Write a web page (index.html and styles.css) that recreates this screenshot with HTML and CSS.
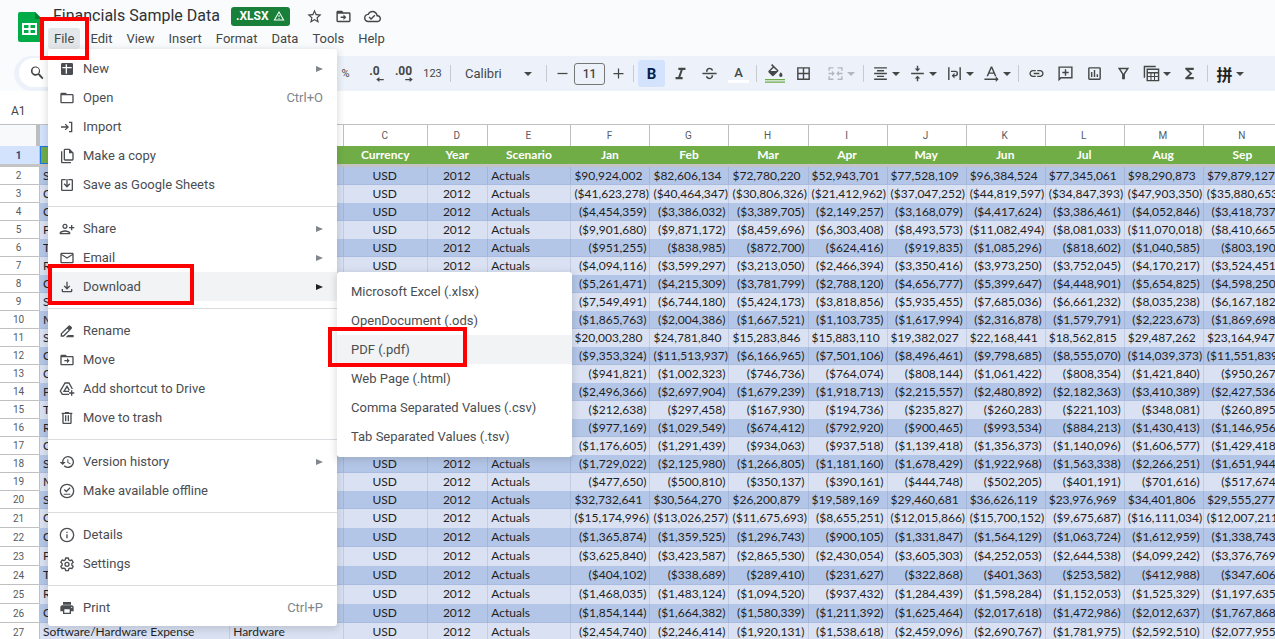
FILE: index.html
```html
<!DOCTYPE html>
<html lang="en">
<head>
<meta charset="utf-8">
<title>Financials Sample Data</title>
<link rel="stylesheet" href="styles.css">
</head>
<body>
<header class="top">
  <svg class="logo" viewBox="0 0 24 30" aria-hidden="true"><path fill="#00ac47" d="M2 0h15l7 7v21a2 2 0 0 1-2 2H2a2 2 0 0 1-2-2V2a2 2 0 0 1 2-2z"/><path fill="#00832d" d="M17 0l7 7h-7z"/><path fill="#fff" fill-rule="evenodd" d="M4 11h15v12H4zM6 13v3h4.500v-3zM12.500 13v3H17v-3zM6 18v3h4.500v-3zM12.500 18v3H17v-3z"/></svg>
  <div class="heading">
    <div class="title-row">
      <h1 class="title">Financials Sample Data</h1>
      <span class="badge">.XLSX <svg class="badge-icon" viewBox="0 0 24 24" aria-hidden="true"><path d="M12 5.990 19.530 19H4.470L12 5.990M12 2 1 21h22L12 2zm1 14h-2v2h2v-2zm0-6h-2v4h2v-4z"/></svg></span>
      <button class="title-btn" aria-label="Star"><svg viewBox="0 0 24 24"><path d="M22 9.240l-7.190-.62L12 2 9.190 8.630 2 9.240l5.460 4.730L5.820 21 12 17.270 18.180 21l-1.630-7.030L22 9.240zM12 15.400l-3.760 2.270 1-4.280-3.320-2.880 4.380-.38L12 6.100l1.710 4.040 4.380.38-3.320 2.880 1 4.280L12 15.400z"/></svg></button>
      <button class="title-btn" aria-label="Move"><svg viewBox="0 0 24 24"><path d="M20 6h-8l-2-2H4c-1.100 0-2 .9-2 2v12c0 1.100.9 2 2 2h16c1.100 0 2-.9 2-2V8c0-1.100-.9-2-2-2zm0 12H4V8h16v10zM12 17l4-4-4-4v3H8v2h4z"/></svg></button>
      <button class="title-btn" aria-label="Document status"><svg viewBox="0 0 24 24"><path d="M19.350 10.040C18.670 6.590 15.640 4 12 4 9.110 4 6.610 5.640 5.360 8.040 2.350 8.360 0 10.900 0 14c0 3.310 2.690 6 6 6h13c2.760 0 5-2.240 5-5 0-2.640-2.050-4.780-4.650-4.960zM19 18H6c-2.210 0-4-1.790-4-4 0-2.050 1.530-3.760 3.560-3.970l1.070-.11.5-.95C8.080 7.140 9.940 6 12 6c2.620 0 4.880 1.860 5.390 4.430l.3 1.500 1.530.11c1.560.1 2.780 1.410 2.780 2.960 0 1.650-1.350 3-3 3zm-9-3.820-2.090-2.090L6.500 13.500 10 17l6.010-6.010-1.410-1.410z"/></svg></button>
    </div>
    <nav class="menubar">
      <div class="menu-slot">
        <button class="menu-btn open">File</button>
        <div class="menu">
          <button class="item"><svg class="ic" viewBox="0 0 24 24"><path fill-rule="evenodd" d="M5 3h14a2 2 0 0 1 2 2v14a2 2 0 0 1-2 2H5a2 2 0 0 1-2-2V5a2 2 0 0 1 2-2zM5 9v2h5v8h2v-8h7V9h-7V5h-2v4z"/></svg><span class="label">New</span><span class="arrow"></span></button>
          <button class="item"><svg class="ic" viewBox="0 0 24 24"><path d="M20 6h-8l-2-2H4c-1.100 0-2 .9-2 2v12c0 1.100.9 2 2 2h16c1.100 0 2-.9 2-2V8c0-1.100-.9-2-2-2zm0 12H4V8h16v10z"/></svg><span class="label">Open</span><span class="keys">Ctrl+O</span></button>
          <button class="item"><svg class="ic" viewBox="0 0 24 24"><path d="M10 7l-1.400 1.400 2.600 2.600H3v2h8.200l-2.600 2.600L10 17l5-5-5-5zM15 4h5v16h-5v-2h3V6h-3z"/></svg><span class="label">Import</span></button>
          <button class="item"><svg class="ic" viewBox="0 0 24 24"><path d="M16 1H9C7.900 1 7 1.900 7 3v14c0 1.100.9 2 2 2h11c1.100 0 2-.9 2-2V7l-6-6zm4 16H9V3h6v5h5v9zM5 5H3v16c0 1.100.9 2 2 2h13v-2H5V5z"/></svg><span class="label">Make a copy</span></button>
          <button class="item"><svg class="ic" viewBox="0 0 24 24"><path d="M19 3h-5v2h5v14H5V5h5V3H5a2 2 0 0 0-2 2v14a2 2 0 0 0 2 2h14a2 2 0 0 0 2-2V5a2 2 0 0 0-2-2zM11 3v9L8.500 9.500 7 11l5 5 5-5-1.500-1.500L13 12V3z"/></svg><span class="label">Save as Google Sheets</span></button>
          <hr class="line">
          <button class="item"><svg class="ic" viewBox="0 0 24 24"><path d="M9 12c2.210 0 4-1.790 4-4s-1.790-4-4-4-4 1.790-4 4 1.790 4 4 4zm0-6c1.100 0 2 .9 2 2s-.9 2-2 2-2-.9-2-2 .9-2 2-2zm0 8c-2.670 0-8 1.340-8 4v2h16v-2c0-2.660-5.330-4-8-4zm-6 4c.22-.72 3.310-2 6-2 2.700 0 5.800 1.290 6 2H3zM20 9V6h-2v3h-3v2h3v3h2v-3h3V9z"/></svg><span class="label">Share</span><span class="arrow"></span></button>
          <button class="item"><svg class="ic" viewBox="0 0 24 24"><path d="M22 6c0-1.100-.9-2-2-2H4c-1.100 0-2 .9-2 2v12c0 1.100.9 2 2 2h16c1.100 0 2-.9 2-2V6zm-2 0-8 5-8-5h16zm0 12H4V8l8 5 8-5v10z"/></svg><span class="label">Email</span><span class="arrow"></span></button>
          <div class="sub-slot">
            <button class="item active"><svg class="ic" viewBox="0 0 24 24"><path d="M18 15v3H6v-3H4v3c0 1.100.9 2 2 2h12c1.100 0 2-.9 2-2v-3h-2zm-1-4-1.410-1.410L13 12.170V4h-2v8.170L8.410 9.590 7 11l5 5 5-5z"/></svg><span class="label">Download</span><span class="arrow"></span></button>
            <span class="mark mark-download"></span>
            <div class="menu submenu">
              <button class="item">Microsoft Excel (.xlsx)</button>
              <button class="item">OpenDocument (.ods)</button>
              <div class="sub-slot">
                <button class="item active">PDF (.pdf)</button>
                <span class="mark mark-pdf"></span>
              </div>
              <button class="item">Web Page (.html)</button>
              <button class="item">Comma Separated Values (.csv)</button>
              <button class="item">Tab Separated Values (.tsv)</button>
            </div>
          </div>
          <hr class="line">
          <button class="item"><svg class="ic" viewBox="0 0 24 24"><path fill-rule="evenodd" d="M17 4a2 2 0 0 0-2.800 0L2.500 15.700V20.500h4.800L19 8.800a2 2 0 0 0 0-2.800zM6.500 18.500h-2v-2l8-8 2 2zM22 18v3.500H10l3.500-3.500z"/></svg><span class="label">Rename</span></button>
          <button class="item"><svg class="ic" viewBox="0 0 24 24"><path d="M20 6h-8l-2-2H4c-1.100 0-2 .9-2 2v12c0 1.100.9 2 2 2h16c1.100 0 2-.9 2-2V8c0-1.100-.9-2-2-2zm0 12H4V8h16v10zM12 17l4-4-4-4v3H8v2h4z"/></svg><span class="label">Move</span></button>
          <button class="item"><svg class="ic" viewBox="0 0 24 24"><g fill="none" stroke="currentColor" stroke-width="2"><path d="M15 20H5l-3-5L9 3h6l5 9"/><path d="M15 15.500H7.500L12 8l3.500 6M19 14v8M15 18h8"/></g></svg><span class="label">Add shortcut to Drive</span></button>
          <button class="item"><svg class="ic" viewBox="0 0 24 24"><path d="M15 4V3H9v1H4v2h1v13c0 1.100.9 2 2 2h10c1.100 0 2-.9 2-2V6h1V4h-5zm2 15H7V6h10v13zM9 8h2v9H9zm4 0h2v9h-2z"/></svg><span class="label">Move to trash</span></button>
          <hr class="line">
          <button class="item"><svg class="ic" viewBox="0 0 24 24"><path d="M13.500 3a9 9 0 0 0-9 9H1l4.500 4.500L10 12H6.500a7 7 0 1 1 2.060 4.940l-1.420 1.420A9 9 0 1 0 13.500 3zM12.500 8v5l4.300 2.500.7-1.200-3.500-2.100V8z"/></svg><span class="label">Version history</span><span class="arrow"></span></button>
          <button class="item"><svg class="ic" viewBox="0 0 24 24"><path d="M12 1a11 11 0 1 0 0 22 11 11 0 0 0 0-22zm0 20a9 9 0 1 1 0-18 9 9 0 0 1 0 18zM7 16h10v1.800H7zM15.900 6.500 11 11.400 8.600 9 7.200 10.400l3.800 3.800 6.300-6.300z"/></svg><span class="label">Make available offline</span></button>
          <hr class="line">
          <button class="item"><svg class="ic" viewBox="0 0 24 24"><path d="M11 7h2v2h-2zm0 4h2v6h-2zm1-10a11 11 0 1 0 0 22 11 11 0 0 0 0-22zm0 20a9 9 0 1 1 0-18 9 9 0 0 1 0 18z"/></svg><span class="label">Details</span></button>
          <button class="item"><svg class="ic" viewBox="0 0 24 24"><g fill="none" stroke="currentColor" stroke-width="2" stroke-linejoin="round"><path d="M10 3h4l.6 2.700 2 1.200 2.700-.9 2 3.500-2 1.800v2.400l2 1.800-2 3.500-2.700-.9-2 1.200L14 22h-4l-.6-2.700-2-1.200-2.700.9-2-3.500 2-1.800v-2.400l-2-1.800 2-3.500 2.700.9 2-1.200z"/><circle cx="12" cy="12.500" r="3"/></g></svg><span class="label">Settings</span></button>
          <hr class="line">
          <button class="item"><svg class="ic" viewBox="0 0 24 24"><path d="M19 8H5c-1.660 0-3 1.340-3 3v6h4v4h12v-4h4v-6c0-1.660-1.340-3-3-3zm-3 11H8v-5h8v5zm3-7c-.55 0-1-.45-1-1s.45-1 1-1 1 .45 1 1-.45 1-1 1zm-1-9H6v4h12V3z"/></svg><span class="label">Print</span><span class="keys">Ctrl+P</span></button>
        </div>
        <span class="mark mark-file"></span>
      </div>
      <button class="menu-btn">Edit</button>
      <button class="menu-btn">View</button>
      <button class="menu-btn">Insert</button>
      <button class="menu-btn">Format</button>
      <button class="menu-btn">Data</button>
      <button class="menu-btn">Tools</button>
      <button class="menu-btn">Help</button>
    </nav>
  </div>
</header>

<div class="toolbar" role="toolbar" aria-label="Main">
  <div class="tb-start"><button class="search" aria-label="Search the menus"><svg viewBox="0 0 24 24"><path d="M15.500 14h-.79l-.28-.27A6.500 6.500 0 1 0 13 15.200l.73.59v.79L18.700 21.500l1.700-1.700zm-6 0a4.500 4.500 0 1 1 0-9 4.500 4.500 0 0 1 0 9z"/></svg></button></div>
  <button class="tb dim">%</button>
  <button class="tb dec" aria-label="Decrease decimal places">.0<svg class="dec-arrow" viewBox="0 0 12 8"><path d="M12 3H5V0L0 4l5 4V5h7z"/></svg></button>
  <button class="tb dec" aria-label="Increase decimal places">.00<svg class="dec-arrow" viewBox="0 0 12 8"><path d="M0 3h7V0l5 4-5 4V5H0z"/></svg></button>
  <button class="tb dim">123</button>
  <span class="sep"></span>
  <button class="font-btn">Calibri<span class="caret"></span></button>
  <span class="sep"></span>
  <button class="tb step" aria-label="Decrease font size"><svg viewBox="0 0 24 24"><path d="M4 11h16v2H4z"/></svg></button>
  <input class="size" value="11" aria-label="Font size">
  <button class="tb step" aria-label="Increase font size"><svg viewBox="0 0 24 24"><path d="M20 13h-7v7h-2v-7H4v-2h7V4h2v7h7z"/></svg></button>
  <span class="sep"></span>
  <button class="tb on" aria-label="Bold"><b>B</b></button>
  <button class="tb" aria-label="Italic"><svg viewBox="0 0 24 24"><path d="M9 4v3h3.200L8.800 17H5v3h10v-3h-3.200l3.400-10H19V4z"/></svg></button>
  <button class="tb" aria-label="Strikethrough"><svg viewBox="0 0 24 24"><path d="M2 11h20v2H2zM7 9.500C7 6 9 4 12.200 4c2.700 0 4.500 1.400 5 3.700h-2.400c-.4-1-1.200-1.600-2.600-1.600-1.700 0-2.800.9-2.800 2.400 0 .4.100.7.200 1zM14.800 14.500h2.400c0 3.400-1.800 5.500-5.200 5.500-2.900 0-4.900-1.500-5.200-4h2.400c.3 1.200 1.300 1.900 2.800 1.900 1.800 0 2.800-1 2.800-2.500z"/></svg></button>
  <button class="tb ink" aria-label="Text color">A</button>
  <span class="sep"></span>
  <button class="tb" aria-label="Fill color"><svg class="fill" viewBox="0 0 24 24"><path d="M16 7.500 8.600 0 7.200 1.400l2 2L4.400 8a1.500 1.500 0 0 0 0 2.100l4 4c.6.600 1.500.6 2.100 0l5.500-5.500a.8.8 0 0 0 0-1.100zM6.500 8.500l4-4 4 4zM19 10s-2 2.200-2 3.500a2 2 0 0 0 4 0c0-1.300-2-3.500-2-3.500z"/><path fill="#6cab46" d="M0 18h24v1.500H0zM0 21h24v1.500H0z"/></svg></button>
  <button class="tb" aria-label="Borders"><svg viewBox="0 0 24 24"><path fill-rule="evenodd" d="M3 3h18v18H3zm2 2v6h6V5zm8 0v6h6V5zm-8 8v6h6v-6zm8 0v6h6v-6z"/></svg></button>
  <button class="combo off merge" aria-label="Merge cells"><svg viewBox="0 0 24 24"><path d="M2 3h7v2H4v3H2zM15 3h7v5h-2V5h-5zM2 16h2v3h5v2H2zM20 16h2v5h-7v-2h5zM2 11h5V8l4 4-4 4v-3H2zM22 11h-5V8l-4 4 4 4v-3h5z"/></svg><span class="caret"></span></button>
  <span class="sep"></span>
  <button class="combo" aria-label="Horizontal align"><svg viewBox="0 0 24 24"><path d="M3 3h18v2H3zM7 7h10v2H7zM3 11h18v2H3zM7 15h10v2H7zM3 19h18v2H3z"/></svg><span class="caret"></span></button>
  <button class="combo" aria-label="Vertical align"><svg viewBox="0 0 24 24"><path d="M3 11h18v2H3zM11 1h2v4h3l-4 4-4-4h3zM11 23h2v-4h3l-4-4-4 4h3z"/></svg><span class="caret"></span></button>
  <button class="combo" aria-label="Text wrapping"><svg viewBox="0 0 24 24"><path d="M3 3h2v18H3zM19 3h2v18h-2zM7 8h6a4 4 0 0 1 0 8h-1v3l-4-4 4-4v3h1a2 2 0 0 0 0-4H7z"/></svg><span class="caret"></span></button>
  <button class="combo" aria-label="Text rotation"><svg viewBox="0 0 24 24"><path fill-rule="evenodd" d="M11 2h2l6 14h-2.200l-1.500-3.500H8.700L7.200 16H5zm1 2.800L9.500 10.500h5zM2 19h16v-3l4 4-4 4v-3H2z"/></svg><span class="caret"></span></button>
  <span class="sep"></span>
  <button class="tb" aria-label="Insert link"><svg viewBox="0 0 24 24"><path d="M3.900 12c0-1.710 1.390-3.100 3.100-3.100h4V7H7c-2.760 0-5 2.240-5 5s2.240 5 5 5h4v-1.900H7c-1.710 0-3.100-1.390-3.100-3.100zM8 13h8v-2H8v2zm9-6h-4v1.900h4c1.710 0 3.100 1.390 3.100 3.100s-1.390 3.100-3.100 3.100h-4V17h4c2.760 0 5-2.240 5-5s-2.240-5-5-5z"/></svg></button>
  <button class="tb" aria-label="Insert comment"><svg viewBox="0 0 24 24"><path fill-rule="evenodd" d="M2 2h20v17H6l-4 4zm2 2v14l1.200-1H20V4zM11 6h2v3.500h3.500v2H13V15h-2v-3.500H7.500v-2H11z"/></svg></button>
  <button class="tb" aria-label="Insert chart"><svg viewBox="0 0 24 24"><path fill-rule="evenodd" d="M5 3h14a2 2 0 0 1 2 2v14a2 2 0 0 1-2 2H5a2 2 0 0 1-2-2V5a2 2 0 0 1 2-2zm0 2v14h14V5zM7 10h2v7H7zM11 7h2v10h-2zM15 13h2v4h-2z"/></svg></button>
  <button class="tb" aria-label="Create a filter"><svg viewBox="0 0 24 24"><path fill-rule="evenodd" d="M4 4h16l-6 9v7h-4v-7zm3.800 2L12 12.300 16.200 6z"/></svg></button>
  <button class="combo" aria-label="Filter views"><svg viewBox="0 0 24 24"><path fill-rule="evenodd" d="M1 1h17v2H3v15H1zM5 5h18v18H5zm2 2v3h14V7zm0 5v3.500h3.500V12zm5 0v3.500h3.500V12zm5 0v3.500h4V12zM7 17v4h3.500v-4zm5 0v4h3.500v-4zm5 0v4h4v-4z"/></svg><span class="caret"></span></button>
  <button class="tb" aria-label="Functions"><svg viewBox="0 0 24 24"><path d="M18 4H6v2l6.500 6L6 18v2h12v-3h-7l5-5-5-5h7z"/></svg></button>
  <span class="sep"></span>
  <button class="combo"><span class="glyph">拼</span><span class="caret"></span></button>
</div>

<div class="namebox">A1</div>

<main class="sheet">
  <table class="grid">
    <colgroup><col class="c-num"><col class="c-a"><col class="c-b"><col class="c-c"><col class="c-d"><col class="c-e"><col class="c-m" span="9"></colgroup>
    <thead id="head"></thead>
    <tbody id="rows"></tbody>
  </table>
</main>
<script src="grid.js"></script>
</body>
</html>
```

FILE: styles.css
```css
* { box-sizing: border-box; }
body {
  margin: 0;
  height: 100vh;
  display: flex;
  flex-direction: column;
  overflow: hidden;
  background: #f9fbfd;
  color: #444746;
  font-family: Roboto, "Liberation Sans", sans-serif;
  font-size: 13px;
}
button {
  font: inherit;
  color: inherit;
  background: none;
  border: 0;
  padding: 0;
  margin: 0;
}
svg { fill: currentColor; display: block; }

.top {
  position: relative;
  z-index: 2;
  display: flex;
  padding-left: 18px;
  height: 56px;
  flex: none;
}
.logo { width: 24px; height: 30px; margin-top: 12px; }
.heading { margin-left: 6px; padding-top: 4px; }
.title-row { display: flex; align-items: center; height: 24px; padding-left: 5px; }
.title { margin: 0; font-size: 16px; line-height: 24px; font-weight: 400; color: #303134; }
.badge {
  display: flex;
  align-items: center;
  gap: 4px;
  height: 19px;
  margin: 0 10px 0 11px;
  padding: 0 5px;
  border-radius: 3px;
  background: #188038;
  color: #fff;
  font-size: 12px;
  font-weight: 700;
}
.badge-icon { width: 12px; height: 12px; }
.title-btn { width: 29px; height: 20px; padding: 0 6px; }
.title-btn svg { width: 17px; height: 17px; }

.menubar { display: flex; gap: 2px; }
.menu-slot { position: relative; margin-right: 2px; }
.menu-btn { height: 21px; padding: 0 6px; border-radius: 3px; color: #444746; }
.menu-btn.open { background: #e4e7ea; }

.menu {
  position: absolute;
  top: 21px;
  left: 0;
  width: 289px;
  padding: 5px 0 4px;
  border-radius: 3px;
  background: #fff;
  box-shadow: 0 2px 6px 2px rgba(60, 64, 67, 0.15);
  color: #4a4d51;
}
.item {
  display: flex;
  align-items: center;
  width: 100%;
  height: 29px;
  padding: 0 14px 0 11px;
  text-align: left;
}
.item.active { background: #f1f3f4; }
.ic { width: 16px; height: 16px; margin-right: 8px; }
.label { flex: 1; }
.keys { color: #80868b; }
.arrow {
  border-left: 7px solid #80868b;
  border-top: 3px solid transparent;
  border-bottom: 3px solid transparent;
}
.active .arrow { border-left-color: #202124; }
.line { height: 1px; margin: 7px 0; border: 0; background: #dadce0; }
.sub-slot { position: relative; }
.submenu { top: 0; left: 289px; width: 235px; padding: 5px 0 6px; z-index: 3; }
.submenu .item { padding-left: 14px; }

/* Tutorial highlight frames */
.mark { position: absolute; border: 4px solid #f00; pointer-events: none; z-index: 4; }
.mark-file { left: -8px; top: -11px; width: 49px; height: 43px; }
.mark-download { left: 0; top: -8px; width: 146px; height: 41px; z-index: 2; }
.mark-pdf { left: -9px; top: -8px; width: 139px; height: 40px; }

.toolbar {
  display: flex;
  align-items: center;
  flex: none;
  height: 35px;
  margin-left: 14px;
  border-radius: 18px 0 0 18px;
  background: #edf2fa;
}
.tb-start { flex: 0 0 317px; padding-left: 5px; }
.search { width: 90px; height: 29px; border-radius: 15px; background: #fff; padding-left: 10px; }
.search svg { width: 17px; height: 17px; }
.tb {
  flex: none;
  display: flex;
  align-items: center;
  justify-content: center;
  width: 27px;
  height: 27px;
  margin: 0 1px;
  border-radius: 3px;
}
.tb svg, .combo svg { width: 17px; height: 17px; }
.dim { font-size: 11px; }
.dec { position: relative; font-size: 12px; font-weight: 700; align-items: flex-start; padding-top: 4px; }
.tb .dec-arrow { position: absolute; right: 4px; bottom: 5px; width: 8px; height: 5px; }
.sep { flex: none; width: 1px; height: 17px; margin: 0 3px; background: #c7cacf; }
.font-btn {
  flex: none;
  display: flex;
  align-items: center;
  justify-content: space-between;
  width: 89px;
  height: 27px;
  padding: 0 11px;
}
.caret {
  flex: none;
  border-top: 4px solid currentColor;
  border-left: 4px solid transparent;
  border-right: 4px solid transparent;
}
.step { width: 24px; margin: 0; }
.tb.step svg { width: 15px; height: 15px; }
.size {
  flex: none;
  width: 31px;
  height: 22px;
  margin: 0 1px 0 0;
  padding: 0;
  border: 1px solid #747775;
  border-radius: 3px;
  background: transparent;
  color: #444746;
  font: 500 12px Roboto, sans-serif;
  text-align: center;
}
.on { background: #d3e3fd; color: #041e49; font-size: 15px; }
.ink { height: 18px; width: 21px; margin: 0 4px; border-radius: 0; border-bottom: 3px solid #fff; font-weight: 500; }
.tb .fill { width: 20px; height: 20px; }
.combo {
  flex: none;
  display: flex;
  align-items: center;
  width: 37px;
  height: 27px;
  padding-left: 5px;
  gap: 3px;
}
.merge { width: 42px; padding-left: 9px; }
.off { color: #b4b8bd; }
.glyph { width: 17px; font: 700 16px "Noto Sans CJK SC", sans-serif; color: #1f1f1f; }

.namebox { flex: none; height: 33px; padding: 6px 11px 0; line-height: 28px; font-size: 12px; background: #fff; color: #444746; }

.sheet { flex: 1; min-height: 0; overflow: hidden; background: #fff; }
.grid {
  width: 1283px;
  table-layout: fixed;
  border-collapse: separate;
  border-spacing: 0;
  font-family: Lato, Carlito, sans-serif;
  font-size: 12px;
  color: #1f1f1f;
}
.c-num { width: 40px; }
.c-a { width: 190px; }
.c-b { width: 114px; }
.c-c { width: 84px; }
.c-d { width: 60px; }
.c-e { width: 83px; }
.c-m { width: 79px; }
.grid th, .grid td { padding: 0 2px 0 3px; line-height: 16px; white-space: nowrap; overflow: hidden; }
.letters th {
  height: 22px;
  border-top: 1px solid #c0c0c0;
  border-right: 1px solid #c0c0c0;
  background: #fff;
  font: 400 10px Roboto, sans-serif;
  color: #575b5f;
}
.letters .corner { border-right: 4px solid #bdbdbd; background: #f8f9fa; }
.letters .picked { background: #d3e3fd; }
.first th { height: 18px; background: #70ad47; color: #fff; text-align: center; font-weight: 700; }
.grid .first .cursor { border: 1px solid #1a73e8; }
.freeze td { height: 3px; background: #c4c4c4; }
.data td { height: 18px; border-right: 1px solid rgba(90, 110, 160, 0.18); background: #d9e1f2; }
.grid .data td { padding-bottom: 2px; line-height: 15px; }
.data.tall td { height: 19px; }
.data.band td { background: #b4c6e7; border-bottom: 1px solid #a9bbdf; padding-bottom: 1px; }
.grid th.num, .grid .data td.num {
  padding: 0 2px 0 0;
  border-right: 1px solid #c0c0c0;
  border-bottom: 1px solid #c0c0c0;
  background: #fff;
  text-align: center;
  font: 400 10px Roboto, sans-serif;
  line-height: 15px;
  color: #575b5f;
}
.grid .first th.num { background: #d3e3fd; border-bottom: 0; font-weight: 700; color: #27457a; }
.grid th { padding: 0 2px 0 0; }
.grid .mid { text-align: center; padding-left: 0; }
.grid .amt { text-align: right; padding-right: 3px; }
.grid .pos { padding-right: 7px; }
```

FILE: grid.js
```js
const accounts = ["Sales", "Cost of Goods Sold", "Commissions Expense", "Payroll Expense",
  "Travel & Entertainment Expense", "R&D Expense", "Consulting Expense",
  "Software/Hardware Expense", "Marketing Expense"];
const months = ["Jan", "Feb", "Mar", "Apr", "May", "Jun", "Jul", "Aug", "Sep"];

/* One line per sheet row from row 2; a leading minus is shown in parentheses. */
const amounts = `
90924002 82606134 72780220 52943701 77528109 96384524 77345061 98290873 79879127
-41623278 -40464347 -30806326 -21412962 -37047252 -44819597 -34847393 -47903350 -35880653
-4454359 -3386032 -3389705 -2149257 -3168079 -4417624 -3386461 -4052846 -3418737
-9901680 -9871172 -8459696 -6303408 -8493573 -11082494 -8081033 -11070018 -8410665
-951255 -838985 -872700 -624416 -919835 -1085296 -818602 -1040585 -803190
-4094116 -3599297 -3213050 -2466394 -3350416 -3973250 -3752045 -4170217 -3524451
-5261471 -4215309 -3781799 -2788120 -4656777 -5399647 -4448901 -5654825 -4598250
-7549491 -6744180 -5424173 -3818856 -5935455 -7685036 -6661232 -8035238 -6167182
-1865763 -2004386 -1667521 -1103735 -1617994 -2316878 -1579791 -2223673 -1869698
20003280 24781840 15283846 15883110 19382027 22168441 18562815 29487262 23164947
-9353324 -11513937 -6166965 -7501106 -8496461 -9798685 -8555070 -14039373 -11551839
-941821 -1002323 -746736 -764074 -808144 -1061422 -808354 -1421840 -950267
-2496366 -2697904 -1679239 -1918713 -2215557 -2480892 -2182363 -3410389 -2427536
-212638 -297458 -167930 -194736 -235827 -260283 -221103 -348081 -260895
-977169 -1029549 -674412 -792920 -900465 -993534 -884213 -1430413 -1146956
-1176605 -1291439 -934063 -937518 -1139418 -1356373 -1140096 -1606577 -1429418
-1729022 -2125980 -1266805 -1181160 -1678429 -1922968 -1563338 -2266251 -1651944
-477650 -500810 -350137 -390161 -444748 -502205 -401191 -701616 -517674
32732641 30564270 26200879 19589169 29460681 36626119 23976969 34401806 29555277
-15174996 -13026257 -11675693 -8655251 -12015866 -15700152 -9675687 -16111034 -12007211
-1365874 -1359525 -1296743 -900105 -1331847 -1564129 -1063724 -1612959 -1338743
-3625840 -3423587 -2865530 -2430054 -3605303 -4252053 -2644538 -4099242 -3376769
-404102 -338689 -289410 -231627 -322868 -401363 -253582 -412988 -347606
-1468035 -1483124 -1094520 -937432 -1284439 -1598284 -1152053 -1525329 -1197635
-1854144 -1664382 -1580339 -1211392 -1625464 -2017618 -1472986 -2012637 -1767868
-2454740 -2246414 -1920131 -1538618 -2459096 -2690767 -1781975 -2592510 -2077955
`.trim().split("\n").map(line => line.split(" ").map(Number));

const units = ["Software", "Advertising", "Hardware"];

function amountCell(n) {
  const text = "$" + Math.abs(n).toLocaleString("en-US");
  return n < 0 ? `<td class="amt">(${text})</td>` : `<td class="amt pos">${text}</td>`;
}

const letters = [..."ABCDEFGHIJKLMN"];
document.getElementById("head").innerHTML =
  `<tr class="letters"><th class="corner"></th>${letters.map((l, i) => `<th${i ? "" : ' class="picked"'}>${l}</th>`).join("")}</tr>` +
  `<tr class="first"><th class="num">1</th><th class="cursor">Account</th><th>Business Unit</th><th>Currency</th><th>Year</th><th>Scenario</th>${months.map(m => `<th>${m}</th>`).join("")}</tr>` +
  `<tr class="freeze"><td colspan="15"></td></tr>`;

document.getElementById("rows").innerHTML = amounts.map((row, i) => {
  const classes = "data" + (i % 2 ? "" : " band") + (i > 18 ? " tall" : "");
  const account = accounts[i % 9].replace("&", "&amp;");
  return `<tr class="${classes}"><td class="num">${i + 2}</td><td>${account}</td><td>${units[Math.floor(i / 9)]}</td>` +
    `<td class="mid">USD</td><td class="mid">2012</td><td>Actuals</td>${row.map(amountCell).join("")}</tr>`;
}).join("");
```
